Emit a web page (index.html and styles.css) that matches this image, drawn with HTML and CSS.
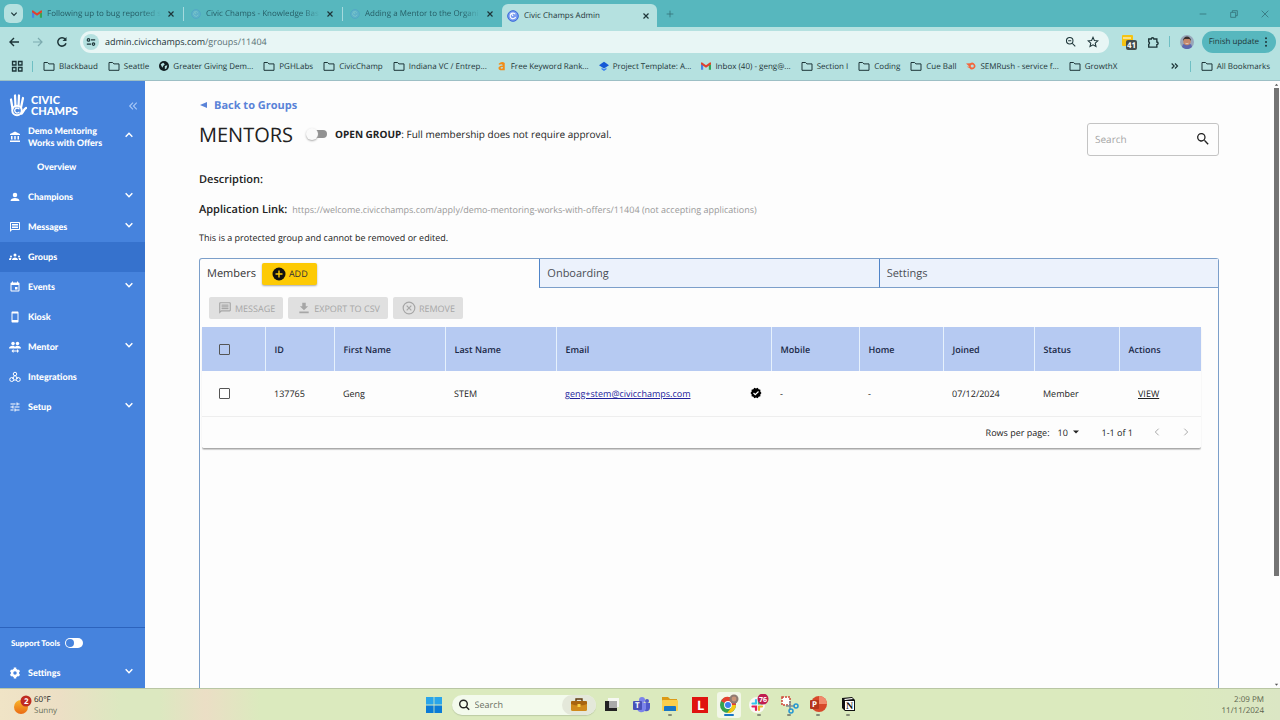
FILE: index.html
```
<!DOCTYPE html>
<html lang="en">
  <head>
    <meta charset="UTF-8" />
    <title>Civic Champs Admin</title>
    <link rel="stylesheet" href="styles.css">
  </head>
  <body>
    <!-- Shared icons -->
    <svg class="sprite" aria-hidden="true">
      <symbol id="folder" viewBox="0 0 12 12"><path d="M1 2.500h3.600l1.300 1.400H11v6.400H1z" fill="none" stroke="currentColor" stroke-linejoin="round" /></symbol>
      <symbol id="close" viewBox="0 0 12 12"><path d="M3 3l6 6M9 3l-6 6" stroke="currentColor" stroke-width="1.400" /></symbol>
      <symbol id="down" viewBox="0 0 12 12"><path d="M2 4l4 4 4-4" fill="none" stroke="currentColor" stroke-width="1.800" /></symbol>
      <symbol id="gmail" viewBox="0 0 12 10"><path d="M0 1.500v8h2.600V4z" fill="#4a83e6" /><path d="M12 1.500v8H9.400V4z" fill="#35a457" /><path d="M9.400 4V1.600L12 1v2z" fill="#f2b50d" /><path d="M0 1l1-.6L6 4l5-3.600 1 .6v2L6 7 0 3z" fill="#e0402f" /></symbol>
      <symbol id="civic" viewBox="0 0 12 12"><circle cx="6" cy="6" r="5.300" fill="#7a9df0" /><circle cx="6" cy="6" r="5.300" fill="none" stroke="#3567d9" /><path d="M8.300 4.300A2.800 2.800 0 1 0 8.600 7M4 3l2 3" fill="none" stroke="#fff" stroke-width="1.100" /></symbol>
      <symbol id="message" viewBox="0 0 24 24"><path d="M4 4h16v12H5.200L4 17.200V4m0-2C2.900 2 2 2.900 2 4v18l4-4h14c1.100 0 2-.9 2-2V4c0-1.100-.9-2-2-2H4zm2 10h12v2H6zm0-3h12v2H6zm0-3h12v2H6z" fill="currentColor" /></symbol>
      <symbol id="search" viewBox="0 0 24 24"><path d="M15.500 14h-.79l-.28-.27A6.500 6.500 0 1 0 13.730 14.430l.27.28v.79l5 4.990L20.490 19zM9.500 14a4.500 4.500 0 1 1 0-9 4.500 4.500 0 0 1 0 9z" fill="currentColor" /></symbol>
    </svg>

    <!-- Browser -->
    <header class="browser">
      <div class="tab-strip">
        <button class="tab-list" aria-label="Search tabs"><svg class="ic-8"><use href="#down" /></svg></button>
        <div class="tab"><svg class="ic-10"><use href="#gmail" /></svg><span class="tab-title">Following up to bug reported s</span><button aria-label="Close tab"><svg class="ic-10"><use href="#close" /></svg></button></div>
        <div class="tab"><svg class="ic-10 faint"><use href="#civic" /></svg><span class="tab-title">Civic Champs - Knowledge Bas</span><button aria-label="Close tab"><svg class="ic-10"><use href="#close" /></svg></button></div>
        <div class="tab"><svg class="ic-10 faint"><use href="#civic" /></svg><span class="tab-title">Adding a Mentor to the Organi</span><button aria-label="Close tab"><svg class="ic-10"><use href="#close" /></svg></button></div>
        <div class="tab tab-active"><svg class="ic-12"><use href="#civic" /></svg><span class="tab-title">Civic Champs Admin</span><button aria-label="Close tab"><svg class="ic-10"><use href="#close" /></svg></button></div>
        <button class="new-tab" aria-label="New tab"><svg class="ic-10" viewBox="0 0 12 12"><path d="M6 2v8M2 6h8" stroke="currentColor" /></svg></button>
        <div class="window-buttons">
          <button aria-label="Minimize"><svg class="ic-10" viewBox="0 0 12 12"><path d="M2 6h8" stroke="currentColor" /></svg></button>
          <button aria-label="Restore"><svg class="ic-10" viewBox="0 0 12 12"><path d="M2 4h6v6H2zM4 4V2h6v6H8" fill="none" stroke="currentColor" /></svg></button>
          <button aria-label="Close"><svg class="ic-10" viewBox="0 0 12 12"><path d="M2 2l8 8M10 2l-8 8" stroke="currentColor" /></svg></button>
        </div>
      </div>

      <div class="toolbar">
        <button aria-label="Back"><svg class="ic-12" viewBox="0 0 12 12"><path d="M11 6H2M6 2L2 6l4 4" fill="none" stroke="currentColor" stroke-width="1.400" /></svg></button>
        <button class="muted" aria-label="Forward"><svg class="ic-12" viewBox="0 0 12 12"><path d="M1 6h9M6 2l4 4-4 4" fill="none" stroke="currentColor" stroke-width="1.200" /></svg></button>
        <button aria-label="Reload"><svg class="ic-12" viewBox="0 0 12 12"><path d="M10 7.200A4.200 4.200 0 1 1 9.300 3.300" fill="none" stroke="currentColor" stroke-width="1.500" /><path d="M10.500 1v4h-4z" fill="currentColor" /></svg></button>
        <div class="omnibox">
          <button class="site-info" aria-label="Site information"><svg class="ic-10" viewBox="0 0 12 12"><g fill="none" stroke="currentColor" stroke-width="1.400"><circle cx="3" cy="3.500" r="1.500" /><path d="M6 3.500h5M1 8.500h5" /><circle cx="9" cy="8.500" r="1.500" /></g></svg></button>
          <span class="url">admin.civicchamps.com<span class="path">/groups/11404</span></span>
          <svg class="ic-12" viewBox="0 0 14 14"><g fill="none" stroke="currentColor" stroke-width="1.200"><circle cx="5.500" cy="5.500" r="3.800" /><path d="M8.500 8.500L12 12M3.700 5.500h3.600" /></g></svg>
          <svg class="ic-12" viewBox="0 0 14 14"><path d="M7 1.500l1.600 3.700 4 .4-3 2.700.9 4L7 10.200l-3.500 2.100.9-4-3-2.700 4-.4z" fill="none" stroke="currentColor" stroke-width="1.200" /></svg>
        </div>
        <div class="toolbar-end">
          <svg class="ext" viewBox="0 0 16 16"><rect x="1" y="1" width="11" height="11" rx="1" fill="#f4c313" /><path d="M2 4h8" stroke="#fff" /><rect x="5" y="6" width="11" height="10" rx="2" fill="#444b4b" /><text x="6" y="14" class="badge-text">41</text></svg>
          <svg class="ic-12" viewBox="0 0 14 14"><path d="M2 3.500h3a1.500 1.500 0 0 1 3 0h3.500v3.500a1.500 1.500 0 0 1 0 3V13H2v-3.200a1.700 1.700 0 0 0 0-3z" fill="none" stroke="currentColor" stroke-width="1.600" /></svg>
          <span class="rule"></span>
          <svg class="avatar" viewBox="0 0 14 14"><circle cx="7" cy="7" r="7" fill="#98a7ba" /><path d="M2 12a5 4 0 0 1 10 0 7 7 0 0 1-10 0z" fill="#5d67ae" /><circle cx="7" cy="6.500" r="3.700" fill="#c5876a" /><path d="M3 6c0-6 8-6 8 0L9.500 4h-5z" fill="#3b302d" /><path d="M5.500 8.300q1.500 1 3 0" fill="none" stroke="#f3e4dc" stroke-width=".7" /></svg>
          <button class="update">Finish update <svg class="ic-10" viewBox="0 0 12 12"><g fill="currentColor"><circle cx="6" cy="1.500" r="1.200" /><circle cx="6" cy="6" r="1.200" /><circle cx="6" cy="10.500" r="1.200" /></g></svg></button>
        </div>
      </div>

      <nav class="bookmarks" aria-label="Bookmarks">
        <button class="apps" aria-label="Apps"><svg class="ic-12" viewBox="0 0 12 12"><path d="M1.500 1.500h3.500v3.500H1.500zM7.500 1.500H11v3.500H7.500zM1.500 7.500h3.500V11H1.500zM7.500 7.500H11V11H7.500z" fill="none" stroke="currentColor" stroke-width="1.300" /></svg></button>
        <span class="rule"></span>
        <a href="#"><svg class="ic-12"><use href="#folder" /></svg>Blackbaud</a>
        <a href="#"><svg class="ic-12"><use href="#folder" /></svg>Seattle</a>
        <a href="#"><svg class="ic-10" viewBox="0 0 12 12"><circle cx="6" cy="6" r="6" fill="#111d20" /><path d="M2 4l3-2 2 2-2 2-1 2zM7 6l3-1-1 4-2 1z" fill="#b5e1e0" /></svg>Greater Giving Dem...</a>
        <a href="#"><svg class="ic-12"><use href="#folder" /></svg>PGHLabs</a>
        <a href="#"><svg class="ic-12"><use href="#folder" /></svg>CivicChamp</a>
        <a href="#"><svg class="ic-12"><use href="#folder" /></svg>Indiana VC / Entrep...</a>
        <a href="#"><svg class="ic-10" viewBox="0 0 12 12"><path d="M2 3.200Q6-.2 9.300 2.500V11H4q-3-.5-2-3.500Q3 5.500 7 5.500 6.500 3 2.300 4.500zM7 7.300Q4 7 4.200 8.500 5 9.800 7 8.800z" fill="#f28c18" fill-rule="evenodd" /></svg>Free Keyword Rank...</a>
        <a href="#"><svg class="ic-10" viewBox="0 0 12 12"><path d="M6 1l6 4-6 4-6-4z" fill="#1558d6" /><path d="M3 8l3 2 3-2v2l-3 2-3-2z" fill="#3a82f3" /></svg>Project Template: A...</a>
        <a href="#"><svg class="ic-10"><use href="#gmail" /></svg>Inbox (40) - geng@...</a>
        <a href="#"><svg class="ic-12"><use href="#folder" /></svg>Section I</a>
        <a href="#"><svg class="ic-12"><use href="#folder" /></svg>Coding</a>
        <a href="#"><svg class="ic-12"><use href="#folder" /></svg>Cue Ball</a>
        <a href="#"><svg class="ic-10" viewBox="0 0 12 12"><path d="M0 3l5-.2A4 4 0 1 1 4 8.500L1 6.800l3-.3z" fill="#f4663b" /><circle cx="7.500" cy="6" r="1.900" fill="#b5e1e0" /></svg>SEMRush - service f...</a>
        <a href="#"><svg class="ic-12"><use href="#folder" /></svg>GrowthX</a>
        <span class="bookmarks-end">
          <svg class="ic-10" viewBox="0 0 12 12"><path d="M2 3l3 3-3 3M6 3l3 3-3 3" fill="none" stroke="currentColor" stroke-width="1.400" /></svg>
          <span class="rule"></span>
          <a href="#"><svg class="ic-12"><use href="#folder" /></svg>All Bookmarks</a>
        </span>
      </nav>
    </header>

    <!-- App -->
    <div class="app">
      <aside class="sidebar">
        <div class="brand">
          <svg class="hand" viewBox="0 0 36 46"><g fill="none" stroke="#fff" stroke-linecap="round"><path d="M4 11l3 18M12 3l1 22M20 3l-1 22M28 8l-4 19" stroke-width="4.500" /><path d="M34 28c-4 2-5 7-9 11" stroke-width="5" /><circle cx="16" cy="33" r="9.500" stroke-width="4" /><path d="M20 29.500a5 5 0 1 0 0 7" stroke-width="2.500" /></g></svg>
          <strong>CIVIC<br>CHAMPS</strong>
          <button aria-label="Collapse menu"><svg class="ic-10" viewBox="0 0 12 12"><path d="M6 2L2 6l4 4M10.500 2l-4 4 4 4" fill="none" stroke="currentColor" stroke-width="1.300" /></svg></button>
        </div>
        <nav>
          <a href="#" class="item"><svg class="ic-12" viewBox="0 0 24 24"><path d="M4 10v7h3v-7zm6.500 0v7h3v-7zM2 22h20v-3H2zm15-12v7h3v-7zM12 1L2 6v2h20V6z" fill="currentColor" /></svg><span>Demo Mentoring Works with Offers</span><svg class="ic-10 chev up"><use href="#down" /></svg></a>
          <a href="#" class="item sub">Overview</a>
          <a href="#" class="item"><svg class="ic-12" viewBox="0 0 24 24"><circle cx="12" cy="8" r="4.500" fill="currentColor" /><path d="M3 20c0-8 18-8 18 0z" fill="currentColor" /></svg><span>Champions</span><svg class="ic-10 chev"><use href="#down" /></svg></a>
          <a href="#" class="item"><svg class="ic-12"><use href="#message" /></svg><span>Messages</span><svg class="ic-10 chev"><use href="#down" /></svg></a>
          <a href="#" class="item selected"><svg class="ic-12" viewBox="0 0 24 24"><g fill="currentColor"><circle cx="12" cy="8" r="3" /><circle cx="4" cy="11" r="2" /><circle cx="20" cy="11" r="2" /><path d="M6 18c0-7 12-7 12 0zM0 18c0-3 2-5 5-4l-1 4zM24 18c0-3-2-5-5-4l1 4z" /></g></svg><span>Groups</span></a>
          <a href="#" class="item"><svg class="ic-12" viewBox="0 0 24 24"><path d="M17 12h-5v5h5zM16 1v2H8V1H6v2H5c-1.100 0-2 .9-2 2v14c0 1.100.9 2 2 2h14c1.100 0 2-.9 2-2V5c0-1.100-.9-2-2-2h-1V1zm3 18H5V8h14z" fill="currentColor" /></svg><span>Events</span><svg class="ic-10 chev"><use href="#down" /></svg></a>
          <a href="#" class="item"><svg class="ic-12" viewBox="0 0 24 24"><path d="M7 1h10c1.100 0 2 .9 2 2v18c0 1.100-.9 2-2 2H7c-1.100 0-2-.9-2-2V3c0-1.100.9-2 2-2zm0 4v13h10V5z" fill="currentColor" fill-rule="evenodd" /></svg><span>Kiosk</span></a>
          <a href="#" class="item"><svg class="ic-12" viewBox="0 0 24 24"><g fill="currentColor"><circle cx="8" cy="5" r="3.500" /><circle cx="17" cy="5" r="3.500" /><path d="M0 15c0-7 11-7 12-3 2-4 12-3 12 3zM5 20l4-4v3h7v-3l4 4-4 4v-3H9v3z" /></g></svg><span>Mentor</span><svg class="ic-10 chev"><use href="#down" /></svg></a>
          <a href="#" class="item"><svg class="ic-12" viewBox="0 0 24 24"><g fill="none" stroke="currentColor" stroke-width="2"><circle cx="12" cy="6" r="3.500" /><circle cx="5.500" cy="17" r="4" /><circle cx="18.500" cy="17" r="4" /><path d="M11 9l-4 7M13 9l4 7M9 18h6" /></g></svg><span>Integrations</span></a>
          <a href="#" class="item"><svg class="ic-12" viewBox="0 0 24 24"><path d="M3 17v2h6v-2zM3 5v2h10V5zm10 16v-2h8v-2h-8v-2h-2v6zM7 9v2H3v2h4v2h2V9zm14 4v-2H11v2zm-6-4h2V7h4V5h-4V3h-2z" fill="currentColor" /></svg><span>Setup</span><svg class="ic-10 chev"><use href="#down" /></svg></a>
        </nav>
        <div class="sidebar-bottom">
          <label class="support">Support Tools <input type="checkbox" class="pill" /></label>
          <a href="#" class="item"><svg class="ic-12" viewBox="0 0 24 24"><circle cx="12" cy="12" r="6" fill="none" stroke="currentColor" stroke-width="5" /><path d="M12 1v5M12 18v5M3 7l4 2M17 15l4 2M21 7l-4 2M7 15l-4 2" stroke="currentColor" stroke-width="5" /></svg><span>Settings</span><svg class="ic-10 chev"><use href="#down" /></svg></a>
        </div>
      </aside>

      <main class="content">
        <a href="#" class="back"><svg class="ic-8" viewBox="0 0 8 8"><path d="M8 1v6L1 4z" fill="currentColor" /></svg>Back to Groups</a>
        <div class="heading">
          <h1>MENTORS</h1>
          <label class="open-group"><input type="checkbox" class="switch" /><span><b>OPEN GROUP</b>: Full membership does not require approval.</span></label>
          <div class="search-box">
            <input type="text" placeholder="Search" aria-label="Search" />
            <svg class="ic-16"><use href="#search" /></svg>
          </div>
        </div>
        <p class="field"><strong>Description:</strong></p>
        <p class="field"><strong>Application Link:</strong> <span class="link-text">https://welcome.civicchamps.com/apply/demo-mentoring-works-with-offers/11404 (not accepting applications)</span></p>
        <p class="note">This is a protected group and cannot be removed or edited.</p>

        <section class="panel">
          <div class="panel-tabs">
            <div class="panel-tab current">
              <button>Members</button>
              <button class="add"><svg class="ic-14" viewBox="0 0 14 14"><circle cx="7" cy="7" r="6.500" fill="#111" /><path d="M7 3.500v7M3.500 7h7" stroke="#ffcb05" stroke-width="1.400" /></svg>ADD</button>
            </div>
            <div class="panel-tab"><button>Onboarding</button></div>
            <div class="panel-tab"><button>Settings</button></div>
          </div>
          <div class="panel-body">
            <div class="actions">
              <button disabled><svg class="ic-14"><use href="#message" /></svg>MESSAGE</button>
              <button disabled><svg class="ic-14" viewBox="0 0 24 24"><path d="M19 9h-4V3H9v6H5l7 7zM4 18v3h16v-3z" fill="currentColor" /></svg>EXPORT TO CSV</button>
              <button disabled><svg class="ic-14" viewBox="0 0 24 24"><g fill="none" stroke="currentColor" stroke-width="2"><circle cx="12" cy="12" r="10" /><path d="M8 8l8 8M16 8l-8 8" /></g></svg>REMOVE</button>
            </div>
            <div class="table-card">
              <table>
                <colgroup>
                  <col class="c-check"><col class="c-id"><col class="c-name"><col class="c-name"><col class="c-email">
                  <col class="c-mobile"><col class="c-home"><col class="c-joined"><col class="c-status"><col class="c-actions">
                </colgroup>
                <thead>
                  <tr>
                    <th><input type="checkbox" aria-label="Select all" /></th>
                    <th>ID</th>
                    <th>First Name</th>
                    <th>Last Name</th>
                    <th>Email</th>
                    <th>Mobile</th>
                    <th>Home</th>
                    <th>Joined</th>
                    <th>Status</th>
                    <th>Actions</th>
                  </tr>
                </thead>
                <tbody>
                  <tr>
                    <td><input type="checkbox" aria-label="Select Geng STEM" /></td>
                    <td>137765</td>
                    <td>Geng</td>
                    <td>STEM</td>
                    <td><div class="email"><a href="#">geng+stem@civicchamps.com</a><svg class="ic-12" viewBox="0 0 24 24"><path d="M23 12l-2.400-2.800.3-3.700-3.600-.8L15.400 1.500 12 3 8.600 1.500 6.700 4.700l-3.600.8.3 3.700L1 12l2.400 2.800-.3 3.700 3.600.8 1.900 3.200L12 21l3.400 1.500 1.900-3.200 3.600-.8-.3-3.700z" fill="#000" /><path d="M7 12l3.500 3.500L17 9" fill="none" stroke="#fff" stroke-width="2.400" /></svg></div></td>
                    <td>-</td>
                    <td>-</td>
                    <td>07/12/2024</td>
                    <td>Member</td>
                    <td class="view"><a href="#">VIEW</a></td>
                  </tr>
                </tbody>
              </table>
              <div class="pager">
                <label for="rows">Rows per page:</label>
                <span class="rows"><select id="rows"><option>10</option></select><svg class="ic-8" viewBox="0 0 8 8"><path d="M1 2.500h6l-3 3z" fill="currentColor" /></svg></span>
                <span>1-1 of 1</span>
                <button disabled aria-label="Previous page"><svg class="ic-10" viewBox="0 0 12 12"><path d="M8 2L4 6l4 4" fill="none" stroke="currentColor" stroke-width="1.200" /></svg></button>
                <button disabled aria-label="Next page"><svg class="ic-10" viewBox="0 0 12 12"><path d="M4 2l4 4-4 4" fill="none" stroke="currentColor" stroke-width="1.200" /></svg></button>
              </div>
            </div>
          </div>
        </section>
      </main>
      <div class="scrollbar">
        <svg class="arrow" viewBox="0 0 6 6"><path d="M1 4.500h4L3 2z" fill="#555" /></svg>
        <div class="thumb"></div>
        <svg class="arrow" viewBox="0 0 6 6"><path d="M1 2h4L3 4.500z" fill="#555" /></svg>
      </div>
    </div>

    <!-- Windows taskbar -->
    <footer class="taskbar">
      <div class="weather">
        <svg class="sun" viewBox="0 0 18 20"><defs><linearGradient id="sunFill" x2="0" y2="1"><stop stop-color="#f8b62c" /><stop offset="1" stop-color="#ea6a14" /></linearGradient></defs><circle cx="7" cy="12" r="7" fill="url(#sunFill)" /><circle cx="12" cy="6" r="5.500" fill="#bf2b22" /><text x="10" y="9" class="badge-text">2</text></svg>
        <span>60°F<br><span class="dim">Sunny</span></span>
      </div>
      <svg class="win" viewBox="0 0 16 16"><path d="M0 0h7.600v7.600H0zM8.400 0H16v7.600H8.400z" fill="#29a5ea" /><path d="M0 8.400h7.600V16H0zM8.400 8.400H16V16H8.400z" fill="#0b7bd6" /></svg>
      <div class="task-search">
        <svg class="ic-12" viewBox="0 0 12 12"><circle cx="5.500" cy="5" r="3.800" fill="none" stroke="#222" stroke-width="1.400" /><path d="M8.200 7.800l3 3" stroke="#222" stroke-width="1.400" /></svg>
        <input type="text" placeholder="Search" aria-label="Taskbar search" />
        <span class="case"><svg viewBox="0 0 16 14"><path d="M5 3V1h6v2" fill="none" stroke="#5e3a10" stroke-width="1.400" /><rect x="0" y="3" width="16" height="10" rx="1.500" fill="#d08a1c" /><path d="M0 4q0-1 1.500-1h13q1.500 0 1.500 1v2q-8 3-16 0z" fill="#a8640f" /><rect x="6.500" y="6" width="3" height="3" fill="#f8cf47" /></svg></span>
      </div>
      <div class="tasks">
        <button aria-label="Task view"><svg viewBox="0 0 20 20"><rect x="7" y="3" width="11" height="9" fill="#f6f8f2" /><path d="M4 6h4v7h8v3H4z" fill="#222" /><path d="M8 6h8v7H8z" fill="#a9aaa9" /></svg></button>
        <button aria-label="Teams"><svg viewBox="0 0 20 20"><circle cx="11" cy="5" r="3" fill="#7b83eb" /><circle cx="16" cy="6" r="2" fill="#5059c9" /><path d="M12 8h7v5q-1 4-5 3z" fill="#5059c9" /><path d="M6 8h9v6q-2 4-6 3-3-1-3-4z" fill="#7b83eb" /><rect x="2" y="6" width="9" height="9" rx="1" fill="#4951b8" /><text x="4" y="13" class="app-letter small">T</text></svg></button>
        <button class="running" aria-label="Files"><svg viewBox="0 0 20 20"><path d="M2 3h6l2 2h7v4H2z" fill="#dc9a16" /><rect x="2" y="6" width="16" height="11" rx="1" fill="#fbcf4c" /><path d="M4 17v-4q0-1 1-1h10q1 0 1 1v4z" fill="#1976c5" /></svg></button>
        <button aria-label="L app"><svg viewBox="0 0 20 20"><rect x="2" y="2" width="16" height="16" fill="#e0130f" /><text x="7" y="15" class="app-letter">L</text></svg></button>
        <button class="focused" aria-label="Chrome"><svg viewBox="0 0 20 20"><circle cx="9" cy="11" r="8" fill="#34a34f" /><path d="M9 11L2 7a8 8 0 0 1 15 4z" fill="#e5402f" /><path d="M13 11h4a8 8 0 0 1-9 8l4-5z" fill="#f9c80f" /><circle cx="9" cy="11" r="3.900" fill="#fff" /><circle cx="9" cy="11" r="3" fill="#3f7fec" /><circle cx="15" cy="5" r="4.500" fill="#8f7b72" /><circle cx="15" cy="5" r="2.400" fill="#c99479" /></svg></button>
        <button class="running" aria-label="Slack"><svg viewBox="0 0 20 20"><circle cx="8" cy="11" r="8" fill="#f9f8f4" /><g stroke-width="2.200" stroke-linecap="round"><path d="M7 6v3M3.500 9.500H7" stroke="#36c5f0" /><path d="M10 7v2.500h3" stroke="#2eb67d" /><path d="M10 12.500V16M10 12.500h3" stroke="#ecb22e" /><path d="M3.500 12.500H7V16" fill="none" stroke="#e01e5a" /></g><circle cx="14" cy="5" r="5.500" fill="#c01b4f" /><text x="10" y="8" class="badge-text count">76</text></svg></button>
        <button class="running" aria-label="Snipping tool"><svg viewBox="0 0 20 20"><path d="M3 3h8v8H3z" fill="#fff" stroke="#cf4436" stroke-width="1.500" stroke-dasharray="2 1" /><path d="M11 7v9M7 12h9" stroke="#7d8c93" stroke-width="1.500" /><circle cx="17" cy="12" r="2" fill="none" stroke="#2496d2" stroke-width="1.500" /><circle cx="12" cy="17" r="2" fill="none" stroke="#2496d2" stroke-width="1.500" /></svg></button>
        <button class="running" aria-label="PowerPoint"><svg viewBox="0 0 20 20"><circle cx="11" cy="10" r="8" fill="#d7482a" /><path d="M11 2a8 8 0 0 1 8 8h-8z" fill="#f18a6c" /><rect x="2" y="6" width="9" height="9" rx="1" fill="#b5351c" /><text x="4" y="13" class="app-letter small">P</text></svg></button>
        <button class="running" aria-label="Notion"><svg viewBox="0 0 20 20"><path d="M4 4l10-1 3 3v11H7l-3-3z" fill="#111" /><path d="M6 5l8-1 1 1-8 1zM7 7h9v9H7z" fill="#fff" /><text x="8" y="15" class="app-letter dark">N</text></svg></button>
      </div>
      <div class="clock">2:09 PM<br>11/11/2024</div>
    </footer>
  </body>
</html>
```
FILE: styles.css
```
:root {
  --blue: #4683dd;
  --blue-dark: #3672cd;
  --line: #7c9fca;
  --head: #b6caf2;
  --chrome: #b5e1e0;
  --teal: #57b7be;
}
* {
  box-sizing: border-box;
}
body {
  margin: 0;
  height: 100vh;
  display: flex;
  flex-direction: column;
  overflow: hidden;
  font-family: "Open Sans", "Noto Sans", sans-serif;
  font-size: 9px;
  text-rendering: geometricPrecision;
  color: #222;
  background: #fdfdfd;
}
button,
input,
select {
  font: inherit;
  color: inherit;
  text-rendering: inherit;
  border: 0;
  padding: 0;
  margin: 0;
  background: none;
}
button {
  display: flex;
  align-items: center;
  justify-content: center;
}
a {
  color: inherit;
  text-decoration: none;
}
svg {
  display: block;
  flex: none;
}
.sprite {
  position: absolute;
  width: 0;
  height: 0;
}
.ic-8 { width: 8px; height: 8px; }
.ic-10 { width: 10px; height: 10px; }
.ic-12 { width: 12px; height: 12px; }
.ic-14 { width: 14px; height: 14px; }
.ic-16 { width: 16px; height: 16px; }

/* Browser */
.browser {
  background: var(--chrome);
  color: #1d3538;
  font-size: 8px;
  border-bottom: 1px solid #9dbfc5;
}
.tab-strip {
  display: flex;
  align-items: center;
  height: 27px;
  padding-left: 4px;
  background: var(--teal);
}
.tab-list {
  width: 19px;
  height: 19px;
  margin-right: 2px;
  border-radius: 6px;
  background: var(--chrome);
}
.tab {
  display: flex;
  align-items: center;
  gap: 5px;
  width: 159px;
  height: 14px;
  padding: 0 7px;
  border-right: 1px solid #a5dadd;
  color: #265e66;
}
.tab button {
  color: #1d3538;
}
.tab-title {
  flex: 1;
  overflow: hidden;
  white-space: nowrap;
}
.tab:not(.tab-active) .tab-title {
  mask-image: linear-gradient(to right, #000 85%, transparent);
}
.faint {
  opacity: 0.2;
}
.tab:nth-child(4) {
  border-right: 0;
}
.tab-active {
  width: 155px;
  height: 23px;
  align-self: flex-end;
  padding: 0 6px 0 5px;
  border: 0;
  border-radius: 6px 6px 0 0;
  background: var(--chrome);
  color: #1d3538;
}
.new-tab {
  width: 26px;
}
.new-tab,
.window-buttons {
  color: #35747c;
}
.window-buttons {
  display: flex;
  gap: 21px;
  margin-left: auto;
  padding-right: 10px;
}
.toolbar {
  display: flex;
  align-items: center;
  gap: 12px;
  height: 29px;
  padding: 0 4px 0 8px;
}
.muted {
  color: #7cabaf;
}
.omnibox {
  flex: 1;
  display: flex;
  align-items: center;
  gap: 10px;
  height: 22px;
  padding: 0 10px 0 3px;
  border-radius: 11px;
  background: #e8f6f5;
}
.site-info {
  width: 16px;
  height: 16px;
  border-radius: 50%;
  background: var(--chrome);
}
.url {
  flex: 1;
  margin-left: -4px;
  font-size: 9px;
}
.path {
  color: #587174;
}
.toolbar-end {
  display: flex;
  align-items: center;
  gap: 10px;
}
.ext {
  width: 16px;
  height: 16px;
}
.rule {
  width: 1px;
  height: 11px;
  background: #6fbfc4;
}
.avatar {
  width: 14px;
  height: 14px;
}
.update {
  gap: 2px;
  height: 22px;
  padding: 0 5px 0 7px;
  margin-left: -2px;
  border-radius: 11px;
  background: var(--teal);
}
.badge-text {
  font: 700 8px "Open Sans", sans-serif;
  fill: #fff;
}
.badge-text.count {
  font-size: 7px;
}
.bookmarks {
  display: flex;
  align-items: center;
  gap: 10px;
  height: 24px;
  padding: 0 10px 4px 11px;
  white-space: nowrap;
}
.bookmarks .apps {
  margin-right: -1px;
}
.bookmarks a {
  display: flex;
  align-items: center;
  gap: 4px;
}
.bookmarks-end {
  display: flex;
  align-items: center;
  gap: 10px;
  margin-left: auto;
}

/* App */
.app {
  flex: 1;
  min-height: 0;
  display: flex;
}
.sidebar {
  flex: none;
  display: flex;
  flex-direction: column;
  width: 145px;
  background: var(--blue);
  color: #fff;
  font-family: Lato, sans-serif;
  font-weight: 900;
}
.brand {
  display: flex;
  align-items: center;
  gap: 4px;
  height: 41px;
  padding: 8px 7px 0 9px;
}
.hand {
  width: 18px;
  height: 23px;
}
.brand strong {
  flex: 1;
  font-size: 11px;
  line-height: 11px;
}
.brand button {
  color: #a9c9f7;
}
.item {
  display: flex;
  align-items: center;
  gap: 7px;
  height: 30px;
  padding: 0 11px 0 9px;
  font-size: 9px;
  line-height: 12px;
}
.item span {
  flex: 1;
}
.chev {
  margin-bottom: 4px;
}
.up {
  transform: rotate(180deg);
}
.sub {
  padding-left: 37px;
}
.selected {
  background: var(--blue-dark);
}
.sidebar-bottom {
  margin-top: auto;
  border-top: 1px solid #2c63bd;
}
.support {
  display: flex;
  align-items: center;
  gap: 5px;
  height: 30px;
  padding-left: 11px;
  font-size: 8px;
}
.pill {
  appearance: none;
  width: 18px;
  height: 10px;
  border-radius: 5px;
  background: #fff;
}
.pill::before {
  content: "";
  display: block;
  width: 8px;
  height: 8px;
  margin: 1px;
  border-radius: 50%;
  background: var(--blue);
}
.content {
  flex: 1;
  min-width: 0;
  display: flex;
  flex-direction: column;
  padding: 15px 55px 0 54px;
}
.back {
  display: flex;
  align-items: center;
  gap: 7px;
  height: 18px;
  color: #5a83d8;
  font-size: 11px;
  font-weight: 700;
}
.heading {
  display: flex;
  align-items: center;
  gap: 13px;
  height: 40px;
}
.heading h1 {
  margin: 0;
  font-size: 20px;
  font-weight: 400;
}
.open-group {
  display: flex;
  align-items: center;
  gap: 8px;
  font-size: 10px;
}
.switch {
  appearance: none;
  display: flex;
  align-items: center;
  width: 21px;
  height: 8px;
  border-radius: 4px;
  background: linear-gradient(to right, transparent 5px, #929292 5px);
}
.switch::before {
  content: "";
  width: 12px;
  height: 12px;
  flex: none;
  border-radius: 50%;
  background: #fafafa;
  box-shadow: 0 1px 2px #aaa;
}
.search-box {
  display: flex;
  align-items: center;
  width: 132px;
  height: 33px;
  margin: 10px 0 0 auto;
  padding: 0 7px;
  border: 1px solid #c4c4c4;
  border-radius: 3px;
}
.search-box input {
  flex: 1;
  min-width: 0;
  font-size: 10px;
  outline: 0;
}
::placeholder {
  color: #a5a5a5;
  opacity: 1;
}
.field {
  display: flex;
  align-items: center;
  gap: 5px;
  height: 30px;
  margin: 0;
}
.heading + .field {
  margin-top: 10px;
}
.field strong {
  font-size: 11px;
  font-weight: 600;
}
.link-text {
  color: #999;
}
.note {
  margin: 0;
  height: 34px;
  line-height: 28px;
}

/* Tabbed panel */
.panel {
  flex: 1;
  min-height: 0;
  display: flex;
  flex-direction: column;
  border: 1px solid var(--line);
  border-bottom: 0;
  border-radius: 3px 3px 0 0;
}
.panel-tabs {
  display: grid;
  grid-template-columns: repeat(3, 1fr);
}
.panel-tab {
  display: flex;
  align-items: center;
  gap: 6px;
  height: 29px;
  padding: 0 7px;
  border-left: 1px solid #4f84c8;
  border-bottom: 1px solid var(--line);
  background: #ecf2fc;
  color: #4b4f55;
  font-size: 11px;
}
.panel-tab.current {
  border: 0;
  background: none;
  color: #333;
}
.add {
  gap: 3px;
  height: 22px;
  padding: 0 9px 0 10px;
  border-radius: 2px;
  background: #fdca05;
  box-shadow: 0 1px 2px #aaa;
  font-size: 9px;
}
.panel-body {
  padding: 9px 17px 0 2px;
}
.actions {
  display: flex;
  gap: 5px;
  padding-left: 7px;
}
.actions button {
  gap: 3px;
  height: 22px;
  padding: 0 8px 0 9px;
  border-radius: 2px;
  background: #e0e0e0;
  color: #a6a6a6;
}
.table-card {
  margin-top: 8px;
  border-bottom: 1px solid #aaa;
  border-radius: 2px;
  box-shadow: 0 1px 1px #ccc;
}
table {
  width: 100%;
  table-layout: fixed;
  border-collapse: collapse;
}
.c-check { width: 63px; }
.c-id { width: 69px; }
.c-name { width: 111px; }
.c-email { width: 215px; }
.c-mobile { width: 88px; }
.c-home { width: 84px; }
.c-joined { width: 91px; }
.c-status { width: 85px; }
.c-actions { width: 82px; }
th,
td {
  height: 45px;
  padding: 0 9px;
  text-align: left;
}
th {
  height: 44px;
  background: var(--head);
  border-right: 1px solid #e6f1fc;
  color: #1a2947;
  font-weight: 600;
}
th:last-child {
  border-right: 0;
}
td {
  border-bottom: 1px solid #eee;
}
th input,
td input {
  appearance: none;
  display: block;
  width: 11px;
  height: 11px;
  margin-left: 8px;
  border: 1px solid #555;
  border-radius: 1px;
}
.email {
  display: flex;
  align-items: center;
  justify-content: space-between;
}
.email a {
  color: #22229c;
  text-decoration: underline;
}
.view {
  padding-left: 19px;
  text-decoration: underline;
}
.pager {
  display: flex;
  align-items: center;
  justify-content: flex-end;
  gap: 19px;
  height: 31px;
  padding-right: 10px;
}
.pager label {
  margin-right: -11px;
}
.pager button {
  color: #aaa;
}
.rows {
  display: flex;
  align-items: center;
  gap: 3px;
  margin-right: 3px;
}
.rows select {
  appearance: none;
}
.scrollbar {
  display: flex;
  flex-direction: column;
  justify-content: space-between;
  width: 6px;
}
.arrow {
  width: 5px;
  height: 7px;
}
.thumb {
  width: 5px;
  height: 488px;
  margin-bottom: auto;
  background: #747474;
}

/* Taskbar */
.taskbar {
  display: flex;
  align-items: center;
  height: 32px;
  padding: 0 8px 0 14px;
  border-top: 1px solid #b9c6a4;
  background: linear-gradient(to right, #f0e4c6, #ecdfc5 60px, #dce8c0 120px, #dce8c0 160px, #ebdec5 205px, #dbeabe 260px, #dbeabe 92%, #dbe6c4);
  font-size: 8px;
  line-height: 11px;
}
.weather {
  flex: 1;
  display: flex;
  align-items: center;
  gap: 2px;
  padding-right: 10px;
}
.sun {
  width: 18px;
  height: 20px;
}
.dim {
  color: #67705a;
}
.win {
  width: 16px;
  height: 16px;
}
.task-search {
  display: flex;
  align-items: center;
  gap: 5px;
  width: 144px;
  height: 20px;
  margin: 0 1px 0 10px;
  padding-left: 6px;
  border-radius: 10px;
  background: #f3faec;
  box-shadow: 0 1px 1px #bccba5;
}
.task-search input {
  flex: 1;
  min-width: 0;
  font-size: 9px;
}
.task-search ::placeholder {
  color: #697062;
}
.case {
  display: flex;
  align-items: center;
  justify-content: center;
  width: 34px;
  height: 20px;
  border-radius: 10px;
  background: #e4e8da;
}
.case svg {
  width: 16px;
  height: 14px;
}
.tasks {
  display: grid;
  grid-template-columns: repeat(9, 1fr);
  justify-items: center;
  width: 266px;
}
.tasks button {
  flex-direction: column;
  width: 24px;
  height: 26px;
  border-radius: 3px;
}
.tasks svg {
  width: 20px;
  height: 20px;
}
.running::after,
.focused::after {
  content: "";
  width: 4px;
  height: 2px;
  border-radius: 1px;
  background: #858c78;
}
.tasks .focused {
  background: #f2f7e8;
}
.focused::after {
  width: 10px;
  background: #1976c5;
}
.app-letter {
  font: 700 13px "Open Sans", sans-serif;
  fill: #fff;
}
.app-letter.small {
  font-size: 8px;
}
.app-letter.dark {
  font: 700 10px "Liberation Serif", serif;
  fill: #111;
}
.clock {
  flex: 1;
  padding-right: 8px;
  color: #5a624c;
  text-align: right;
}
```
